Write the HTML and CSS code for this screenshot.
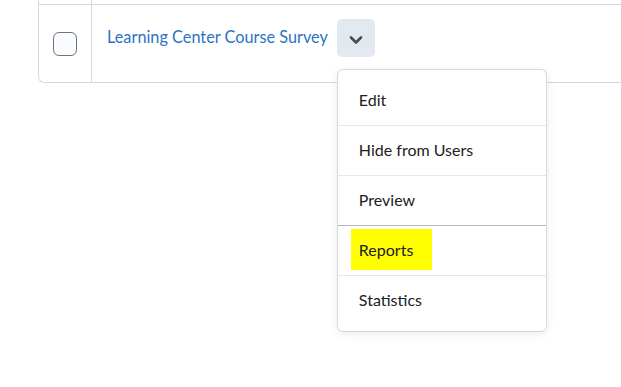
FILE: index.html
```html
<!DOCTYPE html>
<html lang="en">

<head>
  <meta charset="UTF-8">
  <meta name="viewport" content="width=device-width, initial-scale=1">
  <title>Surveys</title>
  <link rel="stylesheet" href="styles.css">
</head>

<body>

  <div class="table">
    <div class="row row-prev">
      <div class="cell cell-check"></div>
      <div class="cell cell-title"></div>
    </div>
    <div class="row">
      <div class="cell cell-check">
        <span class="checkbox"></span>
      </div>
      <div class="cell cell-title">
        <a href="#" class="survey-link">Learning Center Course Survey</a>
        <div class="context">
          <button class="context-btn" aria-label="Actions">
            <svg width="14" height="10" viewBox="0 0 14 10">
              <path d="M2 2.5 L7 7.5 L12 2.5" fill="none" stroke="#494c4e" stroke-width="2.6" stroke-linecap="round" stroke-linejoin="round"/>
            </svg>
          </button>
          <ul class="menu">
            <li class="menu-item">Edit</li>
            <li class="menu-item">Hide from Users</li>
            <li class="menu-item">Preview</li>
            <li class="menu-item focused"><span class="mark">Reports</span></li>
            <li class="menu-item">Statistics</li>
          </ul>
        </div>
      </div>
    </div>
  </div>

</body>

</html>
```

FILE: styles.css
```css
* {
  margin: 0;
  padding: 0;
  box-sizing: border-box;
}

body {
  background: #fff;
  color: #202122;
  font-family: Lato, 'Noto Sans', sans-serif;
  min-height: 387px;
}

.table {
  margin-left: 38px;
  border-left: 1px solid #d3d9e3;
  border-bottom: 1px solid #d3d9e3;
  border-bottom-left-radius: 6px;
}

.row {
  display: flex;
  height: 77px;
}

.row-prev {
  height: 5px;
  border-bottom: 1px solid #d3d9e3;
}

.cell-check {
  width: 53px;
  border-right: 1px solid #d3d9e3;
  display: flex;
  align-items: center;
  padding-left: 14px;
  padding-top: 1px;
}

.checkbox {
  display: block;
  width: 24px;
  height: 24px;
  border: 1px solid #6e7477;
  border-radius: 6px;
  background: #f9fbff;
}

.cell-title {
  flex: 1;
  display: flex;
  align-items: flex-start;
  padding: 14px 0 0 15px;
}

.survey-link {
  color: #2b73c4;
  text-decoration: none;
  font-size: 16.3px;
  line-height: 36px;
  margin-right: 9px;
}

.context {
  position: relative;
}

.context-btn {
  width: 38px;
  height: 38px;
  border: none;
  border-radius: 5px;
  background: #e3e9f1;
  display: flex;
  align-items: center;
  justify-content: center;
  padding-top: 3px;
}

.menu {
  position: absolute;
  top: 50px;
  left: 0;
  width: 210px;
  list-style: none;
  background: #fff;
  border: 1px solid #d3d9e3;
  border-radius: 6px;
  box-shadow: 0 2px 10px rgba(0, 0, 0, 0.08);
  padding: 5px 0 6px;
  z-index: 5;
}

.menu-item {
  height: 50px;
  display: flex;
  align-items: center;
  padding: 0 0 2px 21px;
  font-size: 16px;
  border-top: 1px solid #e3e9f1;
}

.menu-item:first-child {
  border-top: none;
}

.menu-item.focused {
  border-top-color: #b4b8bc;
}

.mark {
  background: #ffff00;
  padding: 11px 19px 11px 8px;
  margin-left: -8px;
}
```
